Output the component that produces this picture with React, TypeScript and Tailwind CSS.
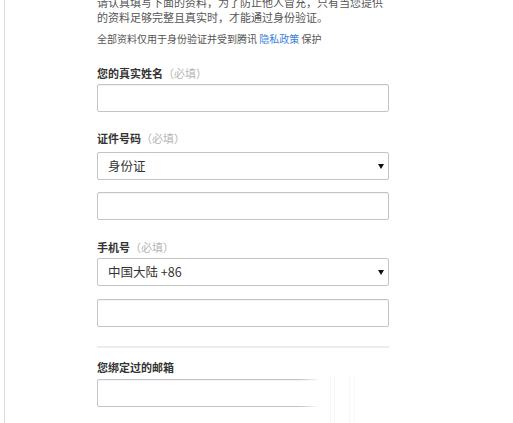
const font = { fontFamily: '"Noto Sans CJK SC", "Liberation Sans", sans-serif' };

function Label({ text, required = true }: { text: string; required?: boolean }) {
  return (
    <div className="text-[11px] leading-[14px]">
      <span className="font-bold text-[#333]">{text}</span>
      {required && <span className="text-[#b5b5b5]">（必填）</span>}
    </div>
  );
}

function Input() {
  return (
    <div className="h-[28px] w-[292px] rounded-[2px] border border-[#c4c4c4] bg-white shadow-[inset_0_1px_1px_rgba(0,0,0,0.05)]" />
  );
}

function Select({ value }: { value: string }) {
  return (
    <div className="flex h-[28px] w-[292px] items-center justify-between rounded-[2px] border border-[#c4c4c4] bg-white pl-[10px] pr-[4px] text-[12.5px] text-[#333]">
      <span>{value}</span>
      <svg width="6" height="5" viewBox="0 0 6 5">
        <path d="M0 0h6L3 5z" fill="#111" />
      </svg>
    </div>
  );
}

export default function App() {
  return (
    <div className="relative h-[423px] w-[513px] overflow-hidden bg-white" style={font}>
      <div className="ml-[4px] flex h-full flex-col border-l border-[#dcdcdc] pl-[92px]">
        <div className="-mt-[5px] flex flex-col gap-[7px] text-[#555]">
          <p className="text-[11px] leading-[15px]">
            请认真填写下面的资料，为了防止他人冒充，只有当您提供
            <br />
            的资料足够完整且真实时，才能通过身份验证。
          </p>
          <p className="text-[10px] leading-[14px]">
            全部资料仅用于身份验证并受到腾讯 <span className="text-[#3b7fd9]">隐私政策</span> 保护
          </p>
        </div>

        <div className="mt-[20px] flex flex-col gap-[4px]">
          <Label text="您的真实姓名" />
          <Input />
        </div>

        <div className="mt-[19px] flex flex-col gap-[7px]">
          <Label text="证件号码" />
          <div className="flex flex-col gap-[12px]">
            <Select value="身份证" />
            <Input />
          </div>
        </div>

        <div className="mt-[20px] flex flex-col gap-[4px]">
          <Label text="手机号" />
          <div className="flex flex-col gap-[13px]">
            <Select value="中国大陆 +86" />
            <Input />
          </div>
        </div>

        <div className="mt-[19px] h-[2px] w-[292px] bg-[#ececec]" />

        <div className="mt-[12px] flex flex-col gap-[5px]">
          <Label text="您绑定过的邮箱" required={false} />
          <Input />
        </div>
      </div>

      {/* faded watermark over the bottom right */}
      <div className="absolute left-[300px] top-[368px] flex h-[55px] w-[180px]">
        <div className="h-full w-[20px] bg-gradient-to-r from-white/0 to-white" />
        <div className="flex h-full flex-1 bg-white pl-[10px] pt-[8px]">
          <div className="flex gap-[3px]">
            <div className="w-px bg-[#f6f6f6]" />
            <div className="w-px bg-[#f8f8f8]" />
          </div>
          <div className="ml-[14px] flex gap-[4px]">
            <div className="w-px bg-[#f6f6f6]" />
            <div className="w-px bg-[#f8f8f8]" />
          </div>
        </div>
      </div>
    </div>
  );
}
